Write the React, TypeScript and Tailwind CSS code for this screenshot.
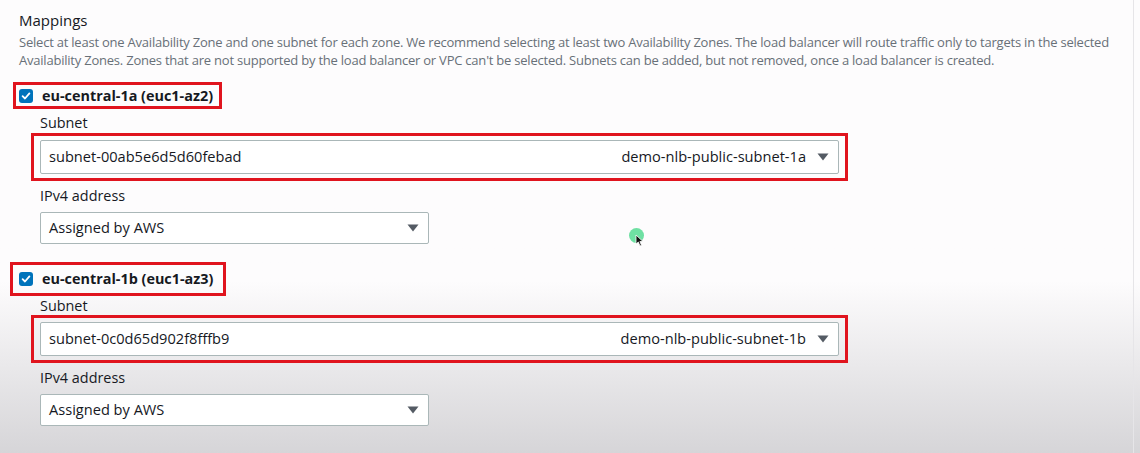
const font = { fontFamily: '"Open Sans", "Liberation Sans", sans-serif' };

function Check() {
  return (
    <span className="flex h-[14px] w-[14px] items-center justify-center rounded-[3px] bg-[#0073bb]">
      <svg width="10" height="10" viewBox="0 0 10 10" fill="none">
        <path d="M1.6 5.2 L4 7.5 L8.4 2.4" stroke="white" strokeWidth="1.8" strokeLinecap="round" strokeLinejoin="round" />
      </svg>
    </span>
  );
}

function Caret() {
  return (
    <svg width="12" height="8" viewBox="0 0 12 8">
      <path d="M0.5 0.5 H11.5 L6 7.5 Z" fill="#545b64" />
    </svg>
  );
}

function Select({ value, extra, cls }: { value: string; extra?: string; cls: string }) {
  return (
    <div className={`flex items-center rounded-[2px] border border-[#aab7b8] bg-white pl-[8px] pr-[9px] text-[14.6px] text-[#16191f] ${cls}`}>
      <span className="flex-1">{value}</span>
      {extra && <span className="mr-[11px]">{extra}</span>}
      <Caret />
    </div>
  );
}

function Zone({ name, subnet, subnetName, first }: { name: string; subnet: string; subnetName: string; first: boolean }) {
  return (
    <div className={first ? "mt-[13px]" : "mt-[18px]"}>
      <div
        className={
          first
            ? "-ml-[6px] flex h-[27px] w-[209px] items-center gap-[9px] border-[3px] border-[#e0141e] pl-[3px]"
            : "-ml-[9px] flex h-[34px] w-[216px] items-center gap-[9px] border-[3px] border-[#e0141e] pl-[6px]"
        }
      >
        <Check />
        <span className="text-[14.4px] font-bold text-[#16191f]">{name}</span>
      </div>
      <div className="ml-[21px]">
        <div
          className={
            first
              ? "mt-[4px] h-[20px] text-[14.4px] leading-[20px] text-[#16191f]"
              : "h-[19px] text-[14.4px] leading-[19px] text-[#16191f]"
          }
        >
          Subnet
        </div>
        <div className="-ml-[9px] w-[817px] border-[3px] border-[#e0141e] px-[6px] py-[4px]">
          <Select value={subnet} extra={subnetName} cls="h-[34px] w-full" />
        </div>
        <div className="mt-[5px] h-[20px] text-[14.4px] leading-[20px] text-[#16191f]">IPv4 address</div>
        <div className="mt-[6px]">
          <Select value="Assigned by AWS" cls="h-[32px] w-[389px]" />
        </div>
      </div>
    </div>
  );
}

export default function App() {
  return (
    <main
      className="relative h-[453px] w-[1140px] overflow-hidden bg-linear-to-b from-[#fdfcfd] from-[62%] to-[#d6d5d8]"
      style={font}
    >
      <div className="h-full w-[1134px] border-r border-[#e6e5e8] pl-[19px] pt-[10px]">
        <h2 className="text-[15px] leading-[20px] text-[#16191f]">Mappings</h2>
        <p className="mt-[3px] text-[13px] leading-[18px] tracking-[-0.22px] text-[#687078]">
          <span className="block whitespace-nowrap">
            Select at least one Availability Zone and one subnet for each zone. We recommend selecting at least two Availability Zones. The load balancer will route traffic only to targets in the selected
          </span>
          <span className="block whitespace-nowrap">
            Availability Zones. Zones that are not supported by the load balancer or VPC can't be selected. Subnets can be added, but not removed, once a load balancer is created.
          </span>
        </p>
        <Zone first name="eu-central-1a (euc1-az2)" subnet="subnet-00ab5e6d5d60febad" subnetName="demo-nlb-public-subnet-1a" />
        <Zone first={false} name="eu-central-1b (euc1-az3)" subnet="subnet-0c0d65d902f8fffb9" subnetName="demo-nlb-public-subnet-1b" />
      </div>

      <div className="absolute left-[629px] top-[228px] h-[15px] w-[15px] rounded-full bg-[#6fe0a3]" />
      <svg className="absolute left-[635px] top-[234px]" width="9" height="13" viewBox="0 0 9 13">
        <path d="M1 1 L1 10 L3.3 8 L5 12 L6.5 11.3 L4.9 7.5 L8 7.5 Z" fill="#111" stroke="white" strokeWidth="0.8" />
      </svg>
    </main>
  );
}
